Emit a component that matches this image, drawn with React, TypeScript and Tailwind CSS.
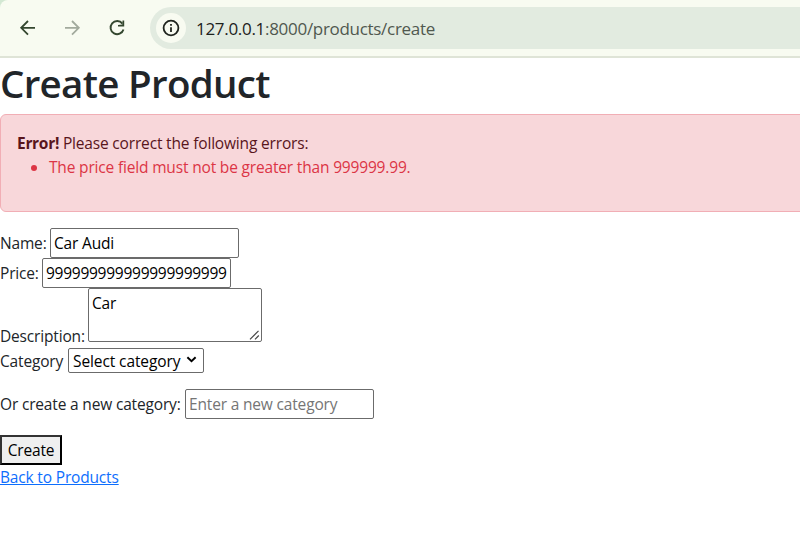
import React from "react";

const field =
  "box-border h-[30px] w-[189px] shrink-0 rounded-[2px] border border-[#6b6b6b] bg-white px-[3px] text-black outline-none placeholder:text-[#757575]";

function BrowserBar() {
  return (
    <div className="bg-[#d3e8d3]">
      <header className="flex h-[58px] items-start rounded-tl-[8px] border-b-2 border-[#dfe4d7] bg-[#f8fbf1] pt-[7px]">
        <div className="flex h-[42px] w-[150px] shrink-0 items-center pl-[18px]">
          <svg width="20" height="20" viewBox="0 0 20 20" fill="none" stroke="#34472f" strokeWidth="1.8">
            <path d="M17 9.8H3.8M10 3L3.2 9.8L10 16.6" />
          </svg>
          <svg className="ml-[24px]" width="20" height="20" viewBox="0 0 20 20" fill="none" stroke="#a2aa9d" strokeWidth="1.8">
            <path d="M3 9.8H16.2M10 3L16.8 9.8L10 16.6" />
          </svg>
          <svg className="ml-[25px]" width="20" height="20" viewBox="0 0 20 20" fill="none" stroke="#34472f" strokeWidth="1.9">
            <path d="M15.4 5.6A6.6 6.6 0 1 0 16.5 11.5" />
            <path d="M17.2 2.4V8.6H11V6.9L15.4 6.6L15.5 2.4Z" fill="#34472f" stroke="none" />
          </svg>
        </div>
        <div className="flex h-[42px] flex-1 items-center rounded-l-full bg-[#e2ebe0] pl-[6px]">
          <span className="flex h-[30px] w-[30px] items-center justify-center rounded-full bg-[#f8fbf1]">
            <svg width="18" height="18" viewBox="0 0 18 18" fill="none" stroke="#20251f" strokeWidth="1.8">
              <circle cx="9" cy="9" r="7.4" />
              <path d="M9 8.2V13M9 5V6.8" />
            </svg>
          </span>
          <span className="mt-[2px] ml-[10px] text-[17px] tracking-[-0.3px] whitespace-nowrap text-[#50584f]">
            <span className="text-[#1d221c]">127.0.0.1</span>:8000/products/create
          </span>
        </div>
      </header>
    </div>
  );
}

export default function App() {
  return (
    <div className="h-[559px] w-[800px] overflow-hidden bg-white font-['Open_Sans','Noto_Sans',sans-serif] text-[15.5px] leading-[24px] tracking-[-0.17px] text-[#212529]">
      <BrowserBar />
      <main>
        <h1 className="mb-[8px] h-[48px] text-[38.5px] leading-[51px] font-semibold tracking-[-0.7px] whitespace-nowrap">
          Create Product
        </h1>
        <div className="mb-[16px] h-[98px] w-[820px] rounded-[6px] border border-[#f1aeb5] bg-[#f8d7da] p-[16px] text-[#58151c]">
          <strong className="font-bold tracking-[-0.3px]">Error!</strong> Please correct the following errors:
          <ul className="list-disc pl-[32px] text-[#dc3545]">
            <li>The price field must not be greater than 999999.99.</li>
          </ul>
        </div>
        <form onSubmit={(e) => e.preventDefault()}>
          <div className="flex items-center">
            <label htmlFor="name" className="w-[50px] shrink-0 whitespace-nowrap">Name:</label>
            <input id="name" className={field} defaultValue="Car Audi" />
          </div>
          <div className="flex items-center">
            <label htmlFor="price" className="w-[42px] shrink-0 whitespace-nowrap">Price:</label>
            <input id="price" className={`${field} tracking-[-0.26px]`} defaultValue="999999999999999999999" />
          </div>
          <div className="flex items-end">
            <label htmlFor="description" className="w-[88px] shrink-0 whitespace-nowrap">
              <span className="block h-[18px]">Description:</span>
            </label>
            <div className="relative">
              <textarea
                id="description"
                className="block h-[54px] w-[174px] resize-none rounded-[2px] border border-[#6b6b6b] bg-white px-[3px] py-[2px] text-black outline-none"
                defaultValue="Car"
              />
              <svg className="absolute right-[2px] bottom-[2px]" width="11" height="10" viewBox="0 0 11 10" stroke="#454545" strokeWidth="1.2">
                <path d="M1 9.3L9.5 0.8M6 9.3L9.8 5.5" />
              </svg>
            </div>
          </div>
          <div className="mt-[6px] flex h-[25px] items-center">
            <label htmlFor="category" className="w-[68px] shrink-0 whitespace-nowrap">Category</label>
            <button
              id="category"
              type="button"
              className="flex h-[25px] w-[136px] items-center justify-between rounded-[2px] border border-[#6b6b6b] bg-white pr-[6px] pl-[4px] tracking-[-0.1px] whitespace-nowrap text-black"
            >
              Select category
              <svg width="11" height="7" viewBox="0 0 12 8" fill="none" stroke="black" strokeWidth="2.2" className="mb-[2px]">
                <path d="M1.3 1.5L6 6L10.7 1.5" />
              </svg>
            </button>
          </div>
          <div className="mt-[16px] flex items-center">
            <label htmlFor="new-category" className="w-[185px] shrink-0 whitespace-nowrap">Or create a new category:</label>
            <input id="new-category" className={field} placeholder="Enter a new category" />
          </div>
          <button
            type="submit"
            className="mt-[16px] block h-[30px] w-[62px] border-2 border-t-[#333] border-r-black border-b-black border-l-[#333] bg-[#efefef] text-center whitespace-nowrap text-black"
          >
            Create
          </button>
        </form>
        <a href="#products" className="block w-fit text-[#0d6efd] underline">Back to Products</a>
      </main>
    </div>
  );
}
